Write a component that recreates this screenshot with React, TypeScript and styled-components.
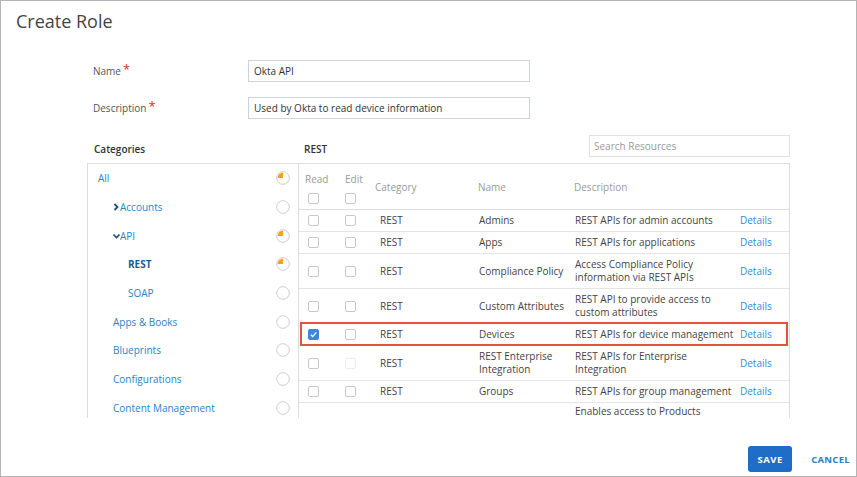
import React from "react";
import styled, { createGlobalStyle, css } from "styled-components";

const Global = createGlobalStyle`
  html, body { margin: 0; padding: 0; background: #fff; }
  * { box-sizing: border-box; }
`;

const FONT = `"Open Sans", "Liberation Sans", Arial, sans-serif`;

const Frame = styled.div`
  width: 857px;
  height: 477px;
  border: 1px solid #b4b4b4;
  display: flex;
  flex-direction: column;
  background: #fff;
  font-family: ${FONT};
  overflow: hidden;
`;

const Title = styled.h1`
  margin: 0;
  padding: 8px 0 0 15px;
  font-size: 18px;
  line-height: 24px;
  font-weight: 400;
  color: #444;
`;

const Form = styled.div`
  margin-top: 27px;
  padding-left: 92px;
  display: grid;
  grid-template-columns: 155px 282px;
  row-gap: 15px;
  align-items: center;
`;

const Label = styled.label`
  font-size: 10px;
  color: #555;
  display: flex;
  align-items: flex-start;
`;

const Required = styled.span`
  color: #d8312c;
  font-size: 13px;
  line-height: 10px;
  margin-left: 2px;
`;

const TextInput = styled.div`
  height: 22px;
  border: 1px solid #cbd3dd;
  padding: 0 5px;
  font-size: 10px;
  color: #333;
  display: flex;
  align-items: center;
`;

const HeaderRow = styled.div`
  margin-top: 16px;
  margin-left: 86px;
  width: 703px;
  height: 28px;
  display: flex;
  align-items: flex-end;
`;

const SectionLabel = styled.div<{ $w?: number; $pl: number }>`
  ${(p) => p.$w && css`width: ${p.$w}px;`}
  padding: 0 0 6px ${(p) => p.$pl}px;
  font-size: 10px;
  line-height: 15px;
  font-weight: 600;
  color: #333;
`;

const TableHead = styled.div`
  flex: 1;
  align-self: stretch;
  display: flex;
  justify-content: space-between;
  align-items: flex-end;
`;

const Search = styled.div`
  align-self: flex-start;
  width: 201px;
  height: 22px;
  border: 1px solid #e0e0e0;
  padding-left: 4px;
  font-size: 10px;
  color: #999;
  display: flex;
  align-items: center;
`;

const Main = styled.div`
  margin-left: 86px;
  height: 255px;
  display: flex;
  overflow: hidden;
`;

const CatPanel = styled.div`
  width: 211px;
  border-left: 1px solid #ddd;
  border-top: 1px solid #ddd;
`;

const CatRow = styled.div<{ $indent: number; $selected?: boolean }>`
  height: 28.7px;
  display: flex;
  align-items: center;
  padding: 0 8px 0 ${(p) => p.$indent}px;
  font-size: 10px;
  color: ${(p) => (p.$selected ? "#1c5c93" : "#2a84c6")};
  font-weight: ${(p) => (p.$selected ? 700 : 400)};
`;

const Chevron = styled.svg`
  width: 7px;
  height: 8px;
  flex: none;
`;

const Pie = styled.svg`
  width: 14px;
  height: 14px;
  margin-left: auto;
  flex: none;
`;

const TablePanel = styled.div`
  width: 492px;
  border: 1px solid #ddd;
  border-bottom: none;
`;

const COLS = "39px 35px 103px 96px 166px 51px";

const HeadGrid = styled.div`
  display: grid;
  grid-template-columns: ${COLS};
  height: 46px;
  border-bottom: 1px solid #ddd;
  font-size: 10px;
  color: #9a9a9a;
`;

const HeadCheckCell = styled.div<{ $pl: number }>`
  padding: 8px 0 0 ${(p) => p.$pl}px;
  display: flex;
  flex-direction: column;
  align-items: flex-start;
  gap: 7px;
  line-height: 14px;
`;

const HeadCheckText = styled.span<{ $ml?: number }>`
  margin-left: ${(p) => p.$ml ?? -3}px;
`;

const HeadCell = styled.div<{ $pl: number }>`
  align-self: center;
  padding-left: ${(p) => p.$pl}px;
  line-height: 14px;
`;

const Row = styled.div<{ $h: number; $highlight?: boolean }>`
  position: relative;
  display: grid;
  grid-template-columns: ${COLS};
  height: ${(p) => p.$h}px;
  border-bottom: 1px solid #e4e4e4;
  font-size: 10px;
  color: #444;
  ${(p) =>
    p.$highlight &&
    css`
      &::after {
        content: "";
        position: absolute;
        top: -2px;
        bottom: -1px;
        left: 1px;
        right: 1px;
        border: 2px solid #e6533d;
        pointer-events: none;
      }
    `}
`;

const PartialRow = styled.div`
  display: grid;
  grid-template-columns: ${COLS};
  padding-top: 2px;
  font-size: 10px;
  line-height: 13px;
  color: #444;
`;

const Cell = styled.div<{ $pl: number; $col?: number }>`
  display: flex;
  flex-direction: column;
  justify-content: center;
  padding-left: ${(p) => p.$pl}px;
  line-height: 13px;
  white-space: nowrap;
  ${(p) => p.$col && css`grid-column: ${p.$col};`}
`;

const CheckCell = styled.div<{ $pl: number }>`
  display: flex;
  align-items: center;
  padding-left: ${(p) => p.$pl}px;
`;

const Box = styled.span<{ $checked?: boolean; $disabled?: boolean }>`
  width: 11px;
  height: 11px;
  border-radius: 2px;
  border: 1px solid ${(p) => (p.$checked ? "#3a86e2" : p.$disabled ? "#ececec" : "#c8c8c8")};
  background: ${(p) => (p.$checked ? "#3a86e2" : "#fff")};
  display: flex;
  align-items: center;
  justify-content: center;
  flex: none;
`;

const DetailsLink = styled.span`
  color: #3a8ad0;
`;

const Footer = styled.div`
  margin-top: auto;
  display: flex;
  justify-content: flex-end;
  align-items: center;
  gap: 19px;
  padding: 0 6px 4px 0;
`;

const SaveButton = styled.button`
  width: 44px;
  height: 26px;
  border: none;
  border-radius: 3px;
  background: #1f6dc6;
  color: #fff;
  font-family: ${FONT};
  font-size: 9.5px;
  font-weight: 700;
  letter-spacing: 0.5px;
  padding: 0;
`;

const CancelButton = styled.button`
  border: none;
  background: none;
  color: #2b7fc0;
  font-family: ${FONT};
  font-size: 9.5px;
  font-weight: 700;
  letter-spacing: 0.3px;
  padding: 0;
`;

const PieIcon = ({ part }: { part: boolean }) => (
  <Pie viewBox="0 0 14 14">
    <circle cx="7" cy="7" r="6.3" fill="#fff" stroke="#cdcdcd" strokeWidth="1" />
    {part && <path d="M7 7 L7 1.6 A5.4 5.4 0 0 0 1.6 7 Z" fill="#f5a11c" />}
  </Pie>
);

const Check = ({ checked, disabled }: { checked?: boolean; disabled?: boolean }) => (
  <Box $checked={checked} $disabled={disabled}>
    {checked && (
      <svg width="9" height="9" viewBox="0 0 9 9">
        <polyline points="1.8,4.8 3.7,6.6 7.3,2.4" fill="none" stroke="#fff" strokeWidth="1.4" />
      </svg>
    )}
  </Box>
);

type Cat = { label: string; indent: number; chevron?: "right" | "down"; part?: boolean; selected?: boolean };

const cats: Cat[] = [
  { label: "All", indent: 10, part: true },
  { label: "Accounts", indent: 25, chevron: "right" },
  { label: "API", indent: 25, chevron: "down", part: true },
  { label: "REST", indent: 40, part: true, selected: true },
  { label: "SOAP", indent: 40 },
  { label: "Apps & Books", indent: 25 },
  { label: "Blueprints", indent: 25 },
  { label: "Configurations", indent: 25 },
  { label: "Content Management", indent: 25 },
];

type Res = { name: string[]; desc: string[]; h: number; read?: boolean; editDisabled?: boolean; highlight?: boolean };

const rows: Res[] = [
  { name: ["Admins"], desc: ["REST APIs for admin accounts"], h: 22 },
  { name: ["Apps"], desc: ["REST APIs for applications"], h: 22 },
  { name: ["Compliance Policy"], desc: ["Access Compliance Policy", "information via REST APIs"], h: 35 },
  { name: ["Custom Attributes"], desc: ["REST API to provide access to", "custom attributes"], h: 35 },
  { name: ["Devices"], desc: ["REST APIs for device management"], h: 22, read: true, highlight: true },
  { name: ["REST Enterprise", "Integration"], desc: ["REST APIs for Enterprise", "Integration"], h: 35, editDisabled: true },
  { name: ["Groups"], desc: ["REST APIs for group management"], h: 22 },
];

export default function App() {
  return (
    <>
      <Global />
      <Frame>
        <Title>Create Role</Title>
        <Form>
          <Label>
            Name<Required>*</Required>
          </Label>
          <TextInput>Okta API</TextInput>
          <Label>
            Description<Required>*</Required>
          </Label>
          <TextInput>Used by Okta to read device information</TextInput>
        </Form>
        <HeaderRow>
          <SectionLabel $w={211} $pl={7}>
            Categories
          </SectionLabel>
          <TableHead>
            <SectionLabel $pl={6}>REST</SectionLabel>
            <Search>Search Resources</Search>
          </TableHead>
        </HeaderRow>
        <Main>
          <CatPanel>
            {cats.map((c) => (
              <CatRow key={c.label} $indent={c.indent} $selected={c.selected}>
                {c.chevron === "right" && (
                  <Chevron viewBox="0 0 7 8">
                    <polyline points="1.5,1 4.5,4 1.5,7" fill="none" stroke="#1a4f82" strokeWidth="1.8" />
                  </Chevron>
                )}
                {c.chevron === "down" && (
                  <Chevron viewBox="0 0 7 8">
                    <polyline points="0.5,2.5 3.5,5.5 6.5,2.5" fill="none" stroke="#1a4f82" strokeWidth="1.6" />
                  </Chevron>
                )}
                <span>{c.label}</span>
                <PieIcon part={!!c.part} />
              </CatRow>
            ))}
          </CatPanel>
          <TablePanel>
            <HeadGrid>
              <HeadCheckCell $pl={9}>
                <HeadCheckText>Read</HeadCheckText>
                <Check />
              </HeadCheckCell>
              <HeadCheckCell $pl={7}>
                <HeadCheckText $ml={0}>Edit</HeadCheckText>
                <Check />
              </HeadCheckCell>
              <HeadCell $pl={2}>Category</HeadCell>
              <HeadCell $pl={2}>Name</HeadCell>
              <HeadCell $pl={2}>Description</HeadCell>
              <HeadCell $pl={2} />
            </HeadGrid>
            {rows.map((r) => (
              <Row key={r.name.join(" ")} $h={r.h} $highlight={r.highlight}>
                <CheckCell $pl={9}>
                  <Check checked={r.read} />
                </CheckCell>
                <CheckCell $pl={7}>
                  <Check disabled={r.editDisabled} />
                </CheckCell>
                <Cell $pl={7}>REST</Cell>
                <Cell $pl={3}>
                  {r.name.map((l) => (
                    <span key={l}>{l}</span>
                  ))}
                </Cell>
                <Cell $pl={3}>
                  {r.desc.map((l) => (
                    <span key={l}>{l}</span>
                  ))}
                </Cell>
                <Cell $pl={2}>
                  <DetailsLink>Details</DetailsLink>
                </Cell>
              </Row>
            ))}
            <PartialRow>
              <Cell $pl={3} $col={5}>
                Enables access to Products
              </Cell>
            </PartialRow>
          </TablePanel>
        </Main>
        <Footer>
          <SaveButton>SAVE</SaveButton>
          <CancelButton>CANCEL</CancelButton>
        </Footer>
      </Frame>
    </>
  );
}
